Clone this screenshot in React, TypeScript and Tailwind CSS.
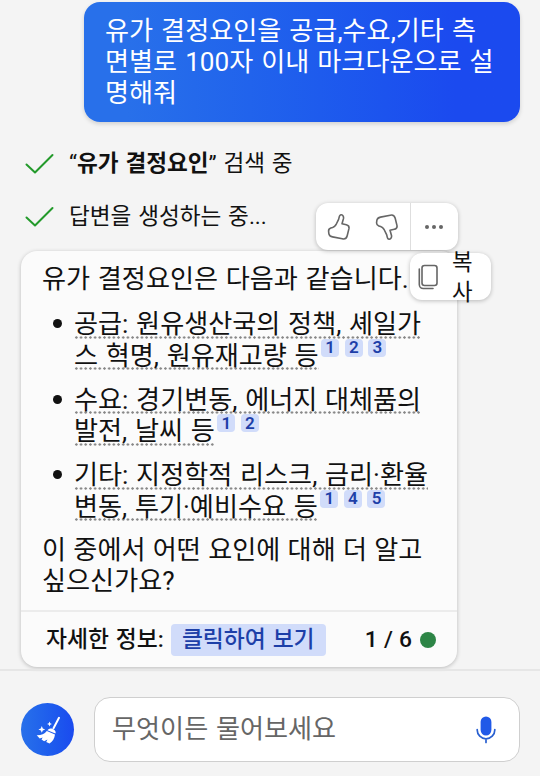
import type { ReactNode } from "react";

function Check() {
  return (
    <svg className="h-7 w-8 shrink-0" viewBox="0 0 32 28" fill="none" stroke="#239a2b" strokeWidth="2" strokeLinecap="round" strokeLinejoin="round">
      <path d="M3.500 14.500 12 22.500 29.500 5" />
    </svg>
  );
}

function Status({ children }: { children: ReactNode }) {
  return (
    <div className="flex h-[53px] items-center pl-[23px] text-[22.600px] whitespace-nowrap">
      <Check />
      <p className="ml-[14px] pt-px">{children}</p>
    </div>
  );
}

function Thumb() {
  return (
    <svg className="size-[30px]" viewBox="0 0 30 30" fill="none" stroke="#666" strokeWidth="1.600" strokeLinejoin="round">
      <path d="M17.300 2.800c1.800.2 2.500 1.900 2.200 3.700l-1.500 5.200 4.300 1c2.100.5 3 1.900 2.700 3.700l-1.800 7.300c-.6 2.400-2.500 3.600-4.900 3.100L8.500 24.900c-2-.4-3.300-1.400-3.600-3.100l-.3-2.300c-.2-1.700.7-2.900 2.200-3.400l1.800-.6c1.600-.6 2.700-1.700 3.500-3l2.500-5.200c.7-1.500.4-4.800 2.700-4.500z" />
    </svg>
  );
}

function Dotted({ children }: { children: ReactNode }) {
  return (
    <span className="h-[31.400px] bg-[radial-gradient(circle,#868686_0.900px,transparent_1.500px)] bg-[length:4.700px_3px] bg-bottom-left bg-repeat-x">
      {children}
    </span>
  );
}

function Bullet({ first, second, refs }: { first: string; second: string; refs: number[] }) {
  return (
    <li className="flex h-[75.500px] leading-[34px]">
      <span className="mt-[12px] mr-[12px] ml-[11px] size-[9px] shrink-0 rounded-full bg-[#111]" />
      <div className="whitespace-nowrap">
        <div className="flex h-[31.400px]">
          <Dotted>{first}</Dotted>
        </div>
        <div className="flex h-[31.400px]">
          <Dotted>{second}</Dotted>
          <span className="ml-[2.500px] flex gap-[5.600px]">
            {refs.map((n) => (
              <sup key={n} className="top-0 flex h-[18px] w-[18px] items-center justify-center rounded bg-[#d1dcfa] text-[17px] leading-none font-semibold text-[#1d3fa8]">
                {n}
              </sup>
            ))}
          </span>
        </div>
      </div>
    </li>
  );
}

export default function App() {
  return (
    <div className="relative flex h-[776px] w-[540px] flex-col overflow-hidden bg-[#f4f4f4] font-[Roboto,'Noto_Sans_CJK_KR',sans-serif] text-[26.150px] text-[#111] [word-spacing:1.200px]">
      <main className="flex h-[669px] flex-col">
        <div className="mt-[2px] mr-5 h-[120px] w-[436px] self-end rounded-2xl bg-linear-to-r from-[#2870ea] from-10% to-[#1b4aef] to-85% px-[21px] pt-[13.500px] leading-[31.400px] whitespace-nowrap text-white shadow-[0_2px_4px_rgba(0,0,0,0.15)] [word-spacing:1.500px]">
          유가 결정요인을 공급,수요,기타 측<br />
          면별로 100자 이내 마크다운으로 설<br />
          명해줘
        </div>
        <div className="mt-[15px]">
          <Status>“<b className="font-bold">유가 결정요인</b>” 검색 중</Status>
          <Status>답변을 생성하는 중...</Status>
        </div>
        <section className="mt-[8px] ml-[21px] flex h-[416px] w-[436px] shrink-0 flex-col rounded-2xl bg-[#fbfbfb] shadow-[0_1px_4px_rgba(0,0,0,0.24)]">
          <div className="h-[359px] px-[21px] pt-[13px] leading-[31.400px] whitespace-nowrap">
            <p>유가 결정요인은 다음과 같습니다.</p>
            <ul className="mt-[12px]">
              <Bullet first="공급: 원유생산국의 정책, 셰일가" second="스 혁명, 원유재고량 등" refs={[1, 2, 3]} />
              <Bullet first="수요: 경기변동, 에너지 대체품의" second="발전, 날씨 등" refs={[1, 2]} />
              <Bullet first="기타: 지정학적 리스크, 금리·환율" second="변동, 투기·예비수요 등" refs={[1, 4, 5]} />
            </ul>
            <p className="mt-px [word-spacing:0.800px]">이 중에서 어떤 요인에 대해 더 알고<br />싶으신가요?</p>
          </div>
          <div className="flex flex-1 items-center border-t-2 border-[#ececec] pr-[21px] pl-[25px] text-[22.800px] font-medium whitespace-nowrap">
            <span className="pt-[2px]">자세한 정보:</span>
            <span className="ml-[7px] flex h-[32px] w-[155px] items-center justify-center rounded bg-[#d1dcfa] pt-[2px] text-[#1d3fa8]">클릭하여 보기</span>
            <span className="ml-auto pt-[2px] [word-spacing:0.500px]">1 / 6</span>
            <span className="ml-[8px] size-4 rounded-full bg-[#2d8546]" />
          </div>
        </section>
      </main>
      <footer className="flex flex-1 items-center border-t-2 border-[#e6e6e6] pr-5 pl-[21px] pt-[12px]">
        <button className="flex size-[53px] items-center justify-center rounded-full bg-linear-to-r from-[#2870ea] to-[#1b4aef]">
          <svg className="size-[28px]" viewBox="0 0 28 28" fill="#fff">
            <path d="M25 1.800 19.500 12.300" stroke="#fff" strokeWidth="2" strokeLinecap="round" />
            <path d="M14.500 13.200c2.500-1.700 7.200.6 7.200 3.400l-.3.900-8-3.300zM12.800 15l8.200 3.600c-.5 3.800-2.200 7-5.500 9l-3.300-1.600 1.300-2.600-3.400 1.800-2.600-1.600 1.200-2-3 .8-3-3.200c4.400.1 7.700-1 10.100-4.200z" />
            <path d="m7.800 10 1 2.400 2.400 1-2.400 1-1 2.400-1-2.400-2.400-1 2.400-1zM15.500 5.600l.7 1.700 1.700.7-1.700.7-.7 1.700-.7-1.700-1.700-.7 1.700-.7z" />
          </svg>
        </button>
        <div className="ml-5 flex h-[65px] flex-1 items-center rounded-2xl border border-[#cfcfcf] bg-white pr-5 pl-[17px]">
          <span className="text-[#666]">무엇이든 물어보세요</span>
          <svg className="ml-auto h-[30px] w-[26px]" viewBox="0 0 26 30" fill="none" stroke="#285fd0" strokeWidth="1.700" strokeLinecap="round">
            <rect x="7.600" y="1.500" width="10.800" height="19" rx="5.400" fill="#2059e8" stroke="none" />
            <path d="M4.200 14.500v.5a8.800 8.800 0 0 0 17.600 0v-.5M13 24v3.500" />
          </svg>
        </div>
      </footer>

      <div className="absolute top-[203px] left-[315.500px] flex h-[47px] w-[142px] rounded-xl bg-white shadow-[0_1px_4px_rgba(0,0,0,0.25)]">
        <div className="flex w-[95px] items-center gap-[18px] border-r border-[#dedede] pl-[8px]">
          <Thumb />
          <span className="-scale-y-100"><Thumb /></span>
        </div>
        <div className="flex flex-1 items-center justify-center gap-[3px]">
          <i className="size-1 rounded-full bg-[#666]" />
          <i className="size-1 rounded-full bg-[#666]" />
          <i className="size-1 rounded-full bg-[#666]" />
        </div>
      </div>
      <div className="absolute top-[253px] left-[410px] flex h-[47px] w-[81px] items-center rounded-xl bg-white pl-[8px] text-[22.400px] leading-[30px] shadow-[0_1px_4px_rgba(0,0,0,0.25)]">
        <svg className="h-[26px] w-[21px]" viewBox="0 0 21 26" fill="none" stroke="#666" strokeWidth="1.600" strokeLinecap="round">
          <rect x="4" y="1.500" width="15" height="20" rx="2.500" />
          <path d="M1.300 5v15.500a4 4 0 0 0 4 4H15" />
        </svg>
        <span className="ml-[13px]">복<br />사</span>
      </div>
    </div>
  );
}
